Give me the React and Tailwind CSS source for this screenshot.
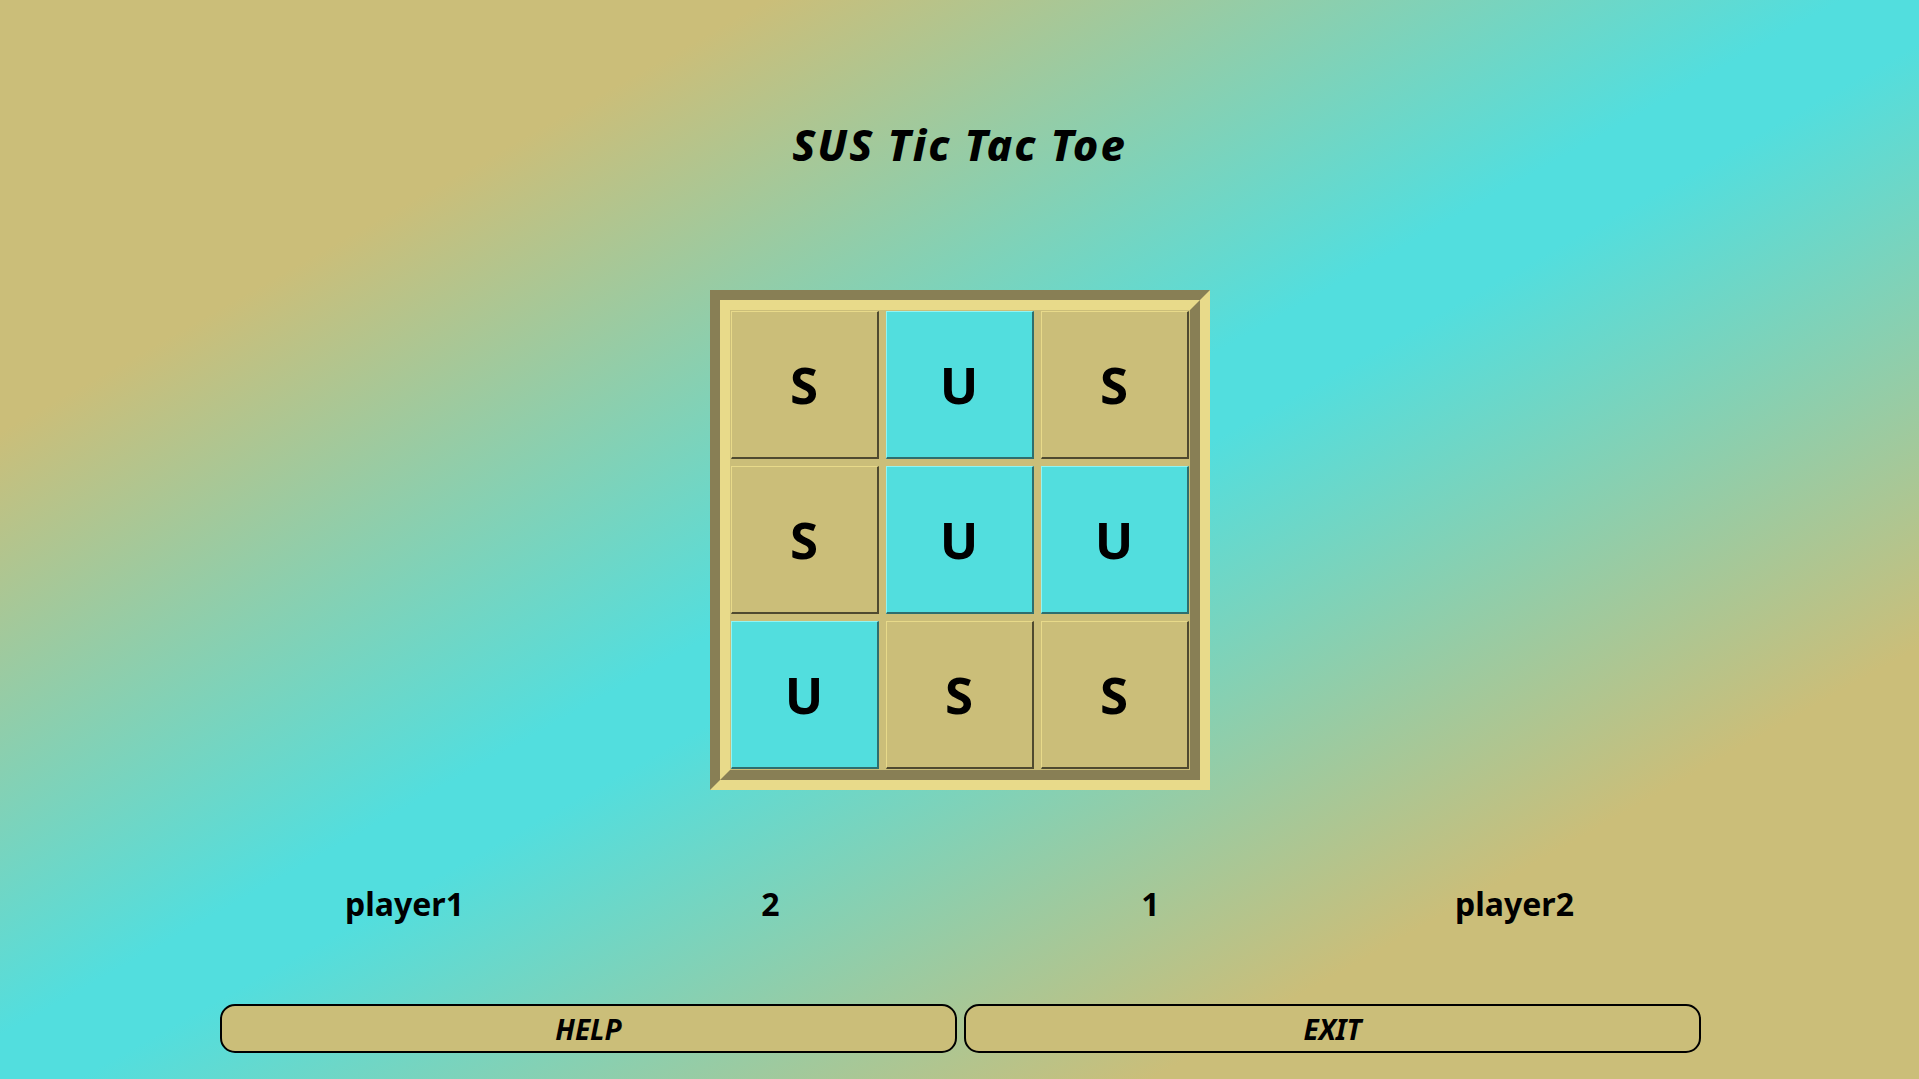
import React from "react";

const board = [
  ["S", "U", "S"],
  ["S", "U", "U"],
  ["U", "S", "S"],
];

const Cell = ({ value }) => {
  const isU = value === "U";
  return (
    <button
      className={
        isU
          ? "flex h-[148px] w-[148px] items-center justify-center border-t border-l border-b-2 border-r-2 border-t-[#8ff5f5] border-l-[#8ff5f5] border-b-[#2f6e6e] border-r-[#2f6e6e] bg-[#52dede] text-[51px] font-bold text-black"
          : "flex h-[148px] w-[148px] items-center justify-center border-t border-l border-b-2 border-r-2 border-t-[#e8da8a] border-l-[#e8da8a] border-b-[#4f4a30] border-r-[#4f4a30] bg-[#cbbe79] text-[51px] font-bold text-black"
      }
    >
      {value}
    </button>
  );
};

export default function App() {
  return (
    <div
      className="flex min-h-screen w-full flex-col items-center bg-[linear-gradient(to_bottom_right,#cbbe79_20%,#52dede_48%,#52dede_52%,#cbbe79_80%)] text-black"
      style={{ fontFamily: '"Noto Sans", "Open Sans", sans-serif' }}
    >
      {/* title */}
      <h1 className="mt-[123px] text-[43px] font-extrabold italic leading-[44px] tracking-[2px]">
        SUS Tic Tac Toe
      </h1>

      {/* board frame: groove look */}
      <div className="mt-[123px] border-[10px] border-t-[#887f55] border-l-[#887f55] border-b-[#e8da8a] border-r-[#e8da8a]">
        <div className="border-[10px] border-t-[#e8da8a] border-l-[#e8da8a] border-b-[#887f55] border-r-[#887f55] bg-[#cbbe79]">
          <div className="grid grid-cols-3 gap-[7px] p-px">
            {board.flat().map((v, i) => (
              <Cell key={i} value={v} />
            ))}
          </div>
        </div>
      </div>

      {/* scores */}
      <div className="mt-[94px] grid w-[1480px] grid-cols-4 text-center text-[32px] font-bold leading-[40px]">
        <span>player1</span>
        <span className="pr-[8px]">2</span>
        <span className="pl-[12px]">1</span>
        <span>player2</span>
      </div>

      {/* actions */}
      <div className="mt-[80px] flex w-[1481px] translate-x-px gap-[7px]">
        <button className="h-[49px] flex-1 rounded-[15px] border-2 border-black bg-[#cbbe79] text-[28px] font-bold italic">
          HELP
        </button>
        <button className="h-[49px] flex-1 rounded-[15px] border-2 border-black bg-[#cbbe79] text-[28px] font-bold italic">
          EXIT
        </button>
      </div>
    </div>
  );
}
